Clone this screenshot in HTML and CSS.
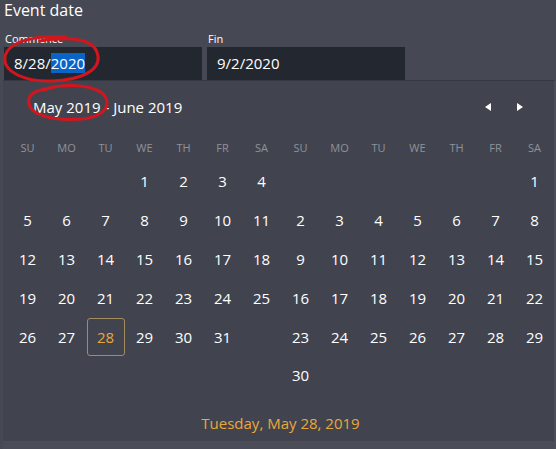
FILE: index.html
```html
<!DOCTYPE html>
<html>
<head>
<meta charset="utf-8">
<link rel="stylesheet" href="styles.css">
</head>
<body>
<div class="page">
  <div class="title">Event date</div>
  <div class="fields">
    <div class="field">
      <div class="label">Commence</div>
      <div class="input">8/28/<span class="sel">2020</span></div>
    </div>
    <div class="field">
      <div class="label">Fin</div>
      <div class="input">9/2/2020</div>
    </div>
  </div>
  <div class="popup">
    <div class="head">
      <div class="range">May 2019 - June 2019</div>
      <div class="nav">
        <span class="tri left"></span>
        <span class="tri right"></span>
      </div>
    </div>
    <div class="months">
      <div class="month">
        <div class="dow">SU</div><div class="dow">MO</div><div class="dow">TU</div><div class="dow">WE</div><div class="dow">TH</div><div class="dow">FR</div><div class="dow">SA</div>
        <div class="day"></div><div class="day"></div><div class="day"></div><div class="day">1</div><div class="day">2</div><div class="day">3</div><div class="day">4</div>
        <div class="day">5</div><div class="day">6</div><div class="day">7</div><div class="day">8</div><div class="day">9</div><div class="day">10</div><div class="day">11</div>
        <div class="day">12</div><div class="day">13</div><div class="day">14</div><div class="day">15</div><div class="day">16</div><div class="day">17</div><div class="day">18</div>
        <div class="day">19</div><div class="day">20</div><div class="day">21</div><div class="day">22</div><div class="day">23</div><div class="day">24</div><div class="day">25</div>
        <div class="day">26</div><div class="day">27</div><div class="day today"><span>28</span></div><div class="day">29</div><div class="day">30</div><div class="day">31</div><div class="day"></div>
        <div class="day"></div><div class="day"></div><div class="day"></div><div class="day"></div><div class="day"></div><div class="day"></div><div class="day"></div>
      </div>
      <div class="month">
        <div class="dow">SU</div><div class="dow">MO</div><div class="dow">TU</div><div class="dow">WE</div><div class="dow">TH</div><div class="dow">FR</div><div class="dow">SA</div>
        <div class="day"></div><div class="day"></div><div class="day"></div><div class="day"></div><div class="day"></div><div class="day"></div><div class="day">1</div>
        <div class="day">2</div><div class="day">3</div><div class="day">4</div><div class="day">5</div><div class="day">6</div><div class="day">7</div><div class="day">8</div>
        <div class="day">9</div><div class="day">10</div><div class="day">11</div><div class="day">12</div><div class="day">13</div><div class="day">14</div><div class="day">15</div>
        <div class="day">16</div><div class="day">17</div><div class="day">18</div><div class="day">19</div><div class="day">20</div><div class="day">21</div><div class="day">22</div>
        <div class="day">23</div><div class="day">24</div><div class="day">25</div><div class="day">26</div><div class="day">27</div><div class="day">28</div><div class="day">29</div>
        <div class="day">30</div><div class="day"></div><div class="day"></div><div class="day"></div><div class="day"></div><div class="day"></div><div class="day"></div>
      </div>
    </div>
    <div class="footer">Tuesday, May 28, 2019</div>
    <div class="strip"></div>
  </div>
  <svg class="marks" width="556" height="449" viewBox="0 0 556 449">
    <path d="M66 37 C40 35 8 40 5 57 C3 72 25 82 52 81 C82 80 100 70 98 56 C96 43 82 38 60 39 C52 39 44 40 40 41" />
    <path d="M44 90 C58 84 88 83 102 93 C112 102 108 116 82 119 C55 121 32 116 29 104 C27 96 33 91 46 89" />
  </svg>
</div>
</body>
</html>
```
FILE: styles.css
```css
* { box-sizing: border-box; }
html, body { margin: 0; padding: 0; }
body {
  background: #464953;
  font-family: "Open Sans", "Noto Sans", sans-serif;
  color: #ffffff;
  width: 556px;
  height: 449px;
  overflow: hidden;
}
.page { position: relative; width: 556px; height: 449px; }
.title {
  font-size: 16px;
  line-height: 20px;
  padding-left: 4px;
  height: 31px;
}
.fields {
  display: flex;
  gap: 5px;
  padding-left: 4px;
}
.field { width: 198px; }
.label {
  font-size: 11px;
  line-height: 16px;
  padding-left: 1px;
}
.input {
  height: 33px;
  background: #232830;
  font-size: 15px;
  line-height: 33px;
  padding-left: 10px;
}
.sel { background: #0a64c8; }
.popup {
  margin-left: 3px;
  width: 553px;
  height: 369px;
  background: #41444f;
  border-top: 1px solid #363943;
  border-right: 2px solid #4c4f5a;
  display: flex;
  flex-direction: column;
}
.head {
  height: 51px;
  display: flex;
  align-items: center;
  justify-content: space-between;
  padding-left: 30px;
  padding-right: 31px;
}
.range { font-size: 15px; }
.nav { display: flex; gap: 26px; align-items: center; }
.tri { width: 0; height: 0; border-top: 4px solid transparent; border-bottom: 4px solid transparent; }
.tri.left { border-right: 6px solid #ffffff; }
.tri.right { border-left: 6px solid #ffffff; }
.months {
  display: flex;
  padding-left: 5px;
}
.month {
  display: grid;
  grid-template-columns: repeat(7, 39px);
  grid-template-rows: 30px repeat(6, 38.8px);
}
.dow {
  font-size: 11px;
  color: #8f929b;
  display: flex;
  align-items: center;
  justify-content: center;
}
.day {
  font-size: 15px;
  display: flex;
  align-items: center;
  justify-content: center;
}
.today span {
  width: 38px;
  height: 38px;
  border: 1px solid #a38c5e;
  border-radius: 3px;
  color: #eaa83a;
  display: flex;
  align-items: center;
  justify-content: center;
}
.footer {
  height: 46px;
  display: flex;
  align-items: center;
  justify-content: center;
  font-size: 15px;
  color: #eaa83a;
  padding-top: 10px;
  padding-left: 4px;
}
.strip {
  flex: 1;
  background: #4a4d58;
}
.marks {
  position: absolute;
  left: 0;
  top: 0;
  pointer-events: none;
}
.marks path {
  fill: none;
  stroke: #d3161d;
  stroke-width: 3;
  stroke-linecap: round;
}
```
